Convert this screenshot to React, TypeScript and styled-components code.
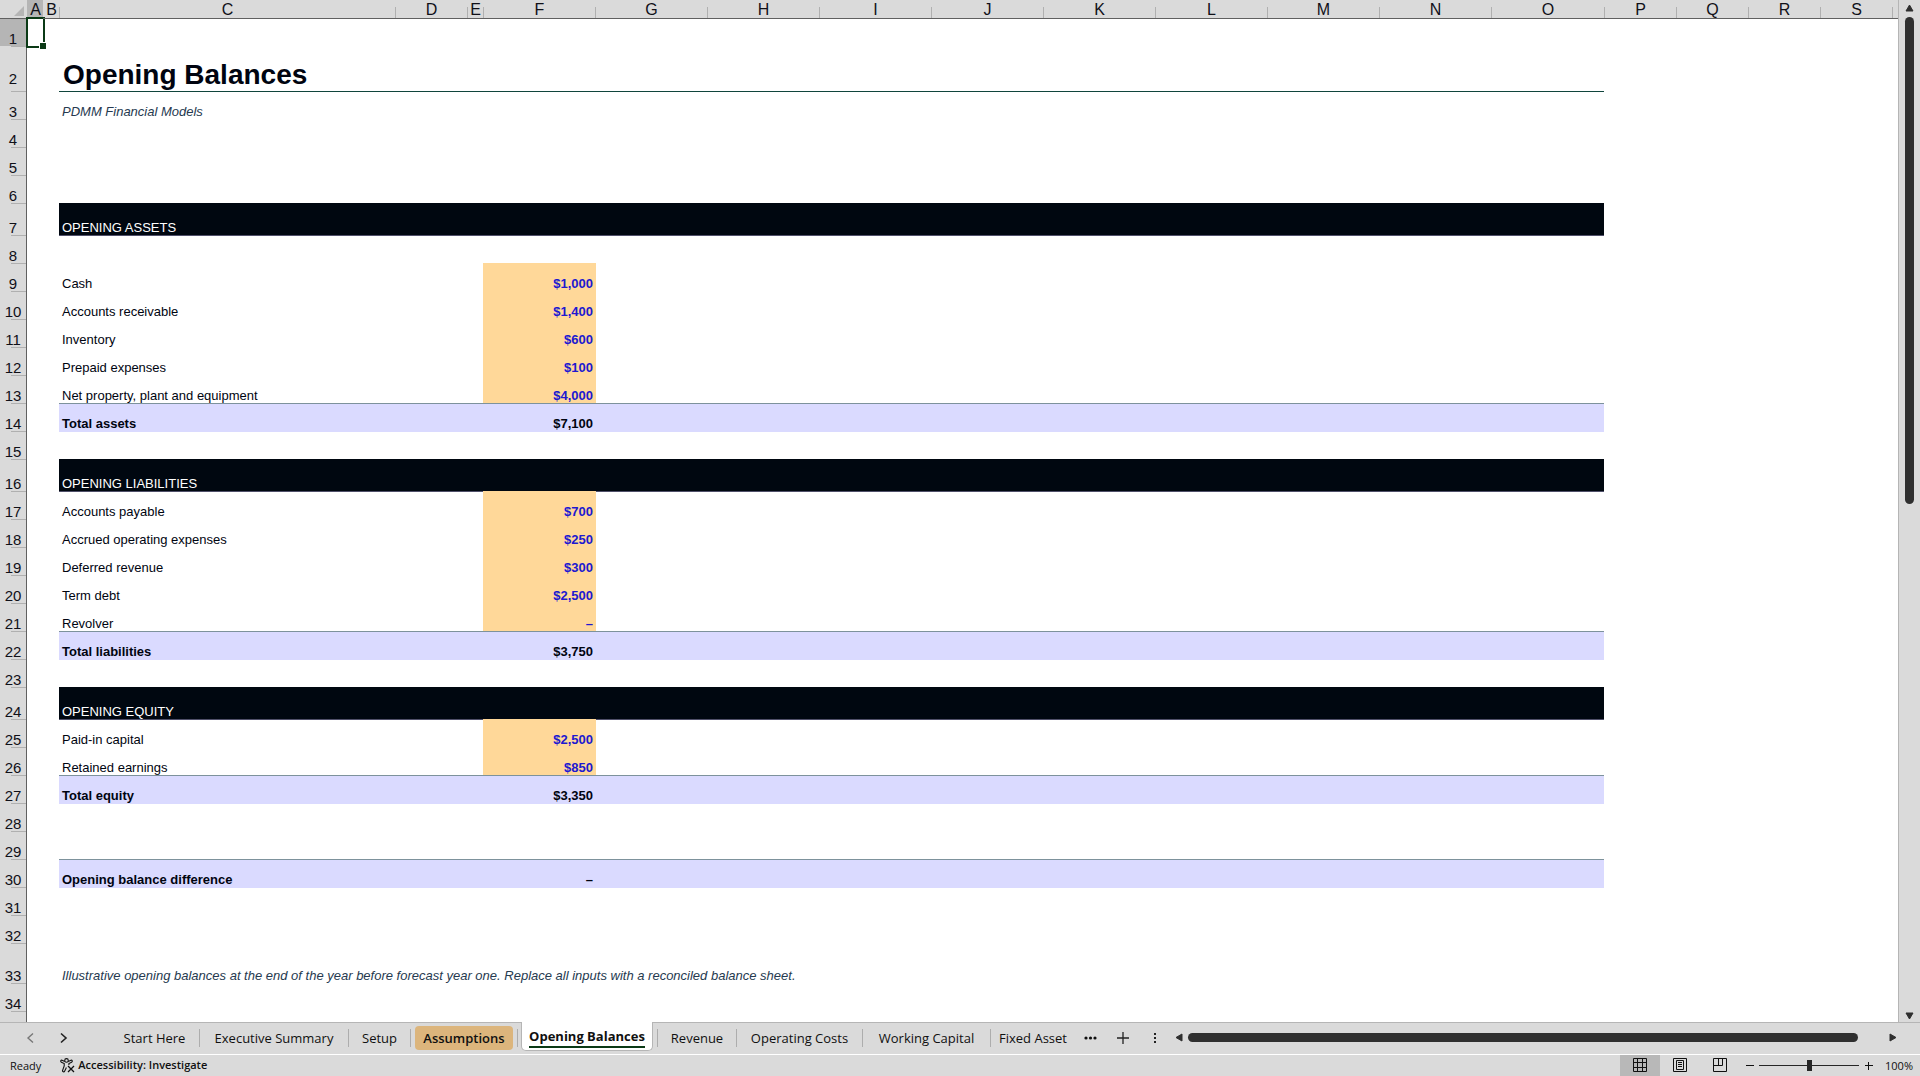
import React from "react";
import styled, { createGlobalStyle, css } from "styled-components";

const GlobalStyle = createGlobalStyle`
  * { box-sizing: border-box; }
  html, body, #root { height: 100%; }
  body { margin: 0; overflow: hidden; background: #dadada; }
  button { border: 0; padding: 0; background: none; font: inherit; color: inherit; cursor: default; }
`;

const sheetFont = `"Liberation Sans", Arial, sans-serif`;
const uiFont = `"Open Sans", "Noto Sans", sans-serif`;

const Window = styled.div`
  display: flex;
  flex-direction: column;
  height: 100vh;
  color: #101010;
  background: #dadada;
`;

const Workspace = styled.div`
  display: flex;
  flex: 1;
  min-height: 0;
`;

const Viewport = styled.main`
  flex: 1;
  min-width: 0;
  overflow: hidden;
  background: #fff;
  border-right: 1px solid #b5b5b5;
`;

const Grid = styled.table`
  width: 100%;
  table-layout: fixed;
  border-collapse: separate;
  border-spacing: 0;
  font: 13px/14px ${sheetFont};
  color: #000410;
`;

const Column = styled.col<{ $width?: number }>`
  ${(p) => p.$width && `width: ${p.$width}px;`}
`;

const ColumnHead = styled.th<{ $active?: boolean; $rule?: boolean }>`
  height: 18px;
  padding: 0 0 0 1px;
  overflow: hidden;
  vertical-align: bottom;
  text-align: center;
  font-size: 16px;
  line-height: 17px;
  font-weight: 400;
  color: #101018;
  background: ${(p) =>
    p.$rule
      ? "linear-gradient(#b0b0b0, #b0b0b0) left bottom / 1px 11px no-repeat #dadada"
      : p.$active
        ? "#b5b5b5"
        : "#dadada"};
`;

const Corner = styled.td`
  height: 18px;
  padding: 0 3px 2px 0;
  background: #dadada;
  vertical-align: bottom;
  text-align: right;
  line-height: 0;
`;

const Row = styled.tr<{ $height: number }>`
  height: ${(p) => p.$height}px;
`;

const RowHead = styled.th<{ $first?: boolean; $title?: boolean }>`
  padding: 0 0 ${(p) => (p.$title ? 5 : 0)}px 0;
  border-right: 1px solid #606060;
  ${(p) => p.$first && "border-top: 1px solid #606060;"}
  vertical-align: bottom;
  text-align: center;
  font-size: 15px;
  line-height: 15px;
  font-weight: 400;
  color: #101018;
  background: linear-gradient(#b0b0b0, #b0b0b0) right top / 15px 1px no-repeat
    ${(p) => (p.$first ? "#b5b5b5" : "#dadada")};
`;

type Tone = "plain" | "band" | "total" | "title" | "rule" | "top";

const tones = {
  plain: css``,
  top: css`
    border-top: 1px solid #606060;
  `,
  title: css`
    padding-left: 4px;
    font-size: 28px;
    line-height: 32px;
    font-weight: 700;
  `,
  rule: css`
    border-top: 1px solid #10453c;
  `,
  band: css`
    background: #000710;
    box-shadow: 0 1px 0 #50506a;
    color: #fff;
  `,
  total: css`
    background: #dadaff;
    box-shadow: 0 1px 0 #dadaff;
    border-top: 1px solid #7d929c;
    font-weight: 700;
  `,
};

const Cell = styled.td<{ $tone?: Tone; $note?: boolean }>`
  position: relative;
  padding: 0 2px 0 3px;
  vertical-align: bottom;
  white-space: nowrap;
  ${(p) => tones[p.$tone ?? "plain"]}
  ${(p) =>
    p.$note &&
    css`
      font-style: italic;
      color: #263a50;
    `}
`;

const Amount = styled(Cell)<{ $input?: boolean }>`
  text-align: right;
  font-weight: 700;
  ${(p) =>
    p.$input &&
    css`
      background: #ffd899;
      box-shadow: 1px 0 0 #ffd899;
      color: #2018d0;
    `}
`;

const Selection = styled.div`
  position: absolute;
  inset: -2px -2px -2px -1px;
  border: 2px solid #0b3a16;

  &::after {
    content: "";
    position: absolute;
    right: -3px;
    bottom: -3px;
    width: 6px;
    height: 6px;
    background: #0b3a16;
    border: solid #fff;
    border-width: 1px 0 0 1px;
  }
`;

const VerticalBar = styled.div`
  display: flex;
  flex-direction: column;
  align-items: center;
  width: 21px;
  padding: 4px 0 2px;
`;

const VerticalTrack = styled.div`
  flex: 1;
  width: 9px;
  margin: 5px 0;
`;

const VerticalThumb = styled.div`
  height: 49.2%;
  border-radius: 5px;
  background: #2f2f2f;
`;

const TabBar = styled.div`
  display: flex;
  align-items: stretch;
  height: 32px;
  border-top: 1px solid #b5b5b5;
  font: 13px/18px ${uiFont};
`;

const TabArrows = styled.div`
  display: flex;
  align-items: center;
  gap: 21px;
  width: 110px;
  padding: 0 0 1px 24px;
`;

const IconButton = styled.button`
  display: flex;
  align-items: center;
  justify-content: center;
`;

const TabList = styled.nav`
  display: flex;
  align-items: flex-start;
`;

const TabSlot = styled.div<{ $width: number; $rule?: boolean }>`
  display: flex;
  justify-content: center;
  width: ${(p) => p.$width}px;
  height: 18px;
  margin-top: 6px;
  border-right: 1px solid ${(p) => (p.$rule ? "#adadad" : "transparent")};
`;

const Tab = styled.button`
  white-space: nowrap;
`;

const TintedTab = styled.button`
  width: 98px;
  height: 24px;
  margin: 3px 0 0 4px;
  border-radius: 4px;
  background: #dcb57c;
  font-weight: 600;
`;

const ActiveTab = styled.button`
  width: 132px;
  height: 29px;
  margin: -1px 0 0 3px;
  padding: 2px 7px 0;
  border: 1px solid #b5b5b5;
  border-top: 0;
  border-radius: 0 0 5px 5px;
  background: #fff;
  font-weight: 700;
  white-space: nowrap;

  span {
    display: block;
    height: 21px;
    border-bottom: 2px solid #0b3a16;
  }
`;

const TabActions = styled.div`
  display: flex;
  align-items: center;
  gap: 20px;
  padding: 0 14px 1px 8px;
`;

const HorizontalBar = styled.div`
  display: flex;
  flex: 1;
  align-items: center;
  gap: 5px;
  padding: 0 23px 2px 0;
`;

const HorizontalTrack = styled.div`
  flex: 1;
  padding-right: 26px;
`;

const HorizontalThumb = styled.div`
  height: 9px;
  border-radius: 5px;
  background: #2f2f2f;
`;

const StatusBar = styled.footer`
  display: flex;
  align-items: center;
  justify-content: space-between;
  height: 22px;
  border-top: 1px solid #fff;
  font: 11px/16px ${uiFont};
`;

const StatusGroup = styled.div`
  display: flex;
  align-items: center;
  height: 100%;
`;

const Ready = styled.span`
  padding: 1px 19px 0 10px;
`;

const Accessibility = styled.button`
  display: flex;
  align-items: center;
  gap: 3px;
  padding-bottom: 1px;
  font-weight: 600;
`;

const ViewButton = styled.button<{ $active?: boolean }>`
  display: flex;
  align-items: center;
  justify-content: center;
  width: 40px;
  height: 21px;
  padding-bottom: 2px;
  background: ${(p) => (p.$active ? "#b8b8b8" : "none")};
`;

const ZoomButton = styled(IconButton)`
  width: 19px;
`;

const ZoomSlider = styled.input`
  appearance: none;
  width: 100px;
  height: 11px;
  margin: 0;
  background: linear-gradient(#262626, #262626) center / 100% 1px no-repeat;

  &::-webkit-slider-thumb {
    appearance: none;
    width: 5px;
    height: 11px;
    background: #262626;
  }
`;

const ZoomValue = styled.button`
  width: 42px;
  padding-right: 7px;
  text-align: right;
`;

const Triangle = ({ points, w, h }: { points: string; w: number; h: number }) => (
  <svg width={w} height={h} viewBox={`0 0 ${w} ${h}`} aria-hidden="true">
    <polygon points={points} fill="#2f2f2f" stroke="#2f2f2f" strokeLinejoin="round" />
  </svg>
);

const columns: [string, number][] = [
  ["A", 16], ["B", 16], ["C", 336], ["D", 72], ["E", 16], ["F", 112],
  ["G", 112], ["H", 112], ["I", 112], ["J", 112], ["K", 112], ["L", 112],
  ["M", 112], ["N", 112], ["O", 113], ["P", 72], ["Q", 72], ["R", 72], ["S", 72],
];

type SheetRow = {
  height?: number;
  label?: string;
  amount?: string;
  kind?: "input" | "total" | "band" | "title" | "subtitle" | "note";
};

const rows: SheetRow[] = [
  {},
  { height: 45, label: "Opening Balances", kind: "title" },
  { label: "PDMM Financial Models", kind: "subtitle" },
  {}, {}, {},
  { height: 32, label: "OPENING ASSETS", kind: "band" },
  {},
  { label: "Cash", amount: "$1,000", kind: "input" },
  { label: "Accounts receivable", amount: "$1,400", kind: "input" },
  { label: "Inventory", amount: "$600", kind: "input" },
  { label: "Prepaid expenses", amount: "$100", kind: "input" },
  { label: "Net property, plant and equipment", amount: "$4,000", kind: "input" },
  { label: "Total assets", amount: "$7,100", kind: "total" },
  {},
  { height: 32, label: "OPENING LIABILITIES", kind: "band" },
  { label: "Accounts payable", amount: "$700", kind: "input" },
  { label: "Accrued operating expenses", amount: "$250", kind: "input" },
  { label: "Deferred revenue", amount: "$300", kind: "input" },
  { label: "Term debt", amount: "$2,500", kind: "input" },
  { label: "Revolver", amount: "–", kind: "input" },
  { label: "Total liabilities", amount: "$3,750", kind: "total" },
  {},
  { height: 32, label: "OPENING EQUITY", kind: "band" },
  { label: "Paid-in capital", amount: "$2,500", kind: "input" },
  { label: "Retained earnings", amount: "$850", kind: "input" },
  { label: "Total equity", amount: "$3,350", kind: "total" },
  {}, {},
  { label: "Opening balance difference", amount: "–", kind: "total" },
  {}, {},
  {
    height: 40,
    label:
      "Illustrative opening balances at the end of the year before forecast year one. Replace all inputs with a reconciled balance sheet.",
    kind: "note",
  },
  {},
];

const toneOf = (kind: SheetRow["kind"]): Tone =>
  kind === "band" || kind === "total" || kind === "title" ? kind : kind === "subtitle" ? "rule" : "plain";

const SheetCells = ({ row }: { row: SheetRow }) => {
  const tone = toneOf(row.kind);
  if (!row.label) return <Cell colSpan={19} />;
  if (!row.amount)
    return (
      <>
        <Cell />
        <Cell colSpan={13} $tone={tone} $note={row.kind === "subtitle" || row.kind === "note"}>
          {row.label}
        </Cell>
        <Cell colSpan={5} />
      </>
    );
  return (
    <>
      <Cell />
      <Cell colSpan={3} $tone={tone}>{row.label}</Cell>
      <Amount $tone={tone} $input={row.kind === "input"}>{row.amount}</Amount>
      <Cell colSpan={9} $tone={tone} />
      <Cell colSpan={5} />
    </>
  );
};

const AccessibilityIcon = () => (
  <svg width="15" height="15" viewBox="0 0 15 15" fill="none" stroke="#101010" strokeWidth="1.1" aria-hidden="true">
    <circle cx="6.5" cy="2.4" r="1.8" />
    <path d="M4.8 3.4 2 2.2C.8 1.8.2 3.6 1.4 4.2L4.2 5.6V8L2.6 12.4c-.4 1.4 1.4 2 2 .8L6.4 9.4M8.2 3.4 11 2.2c1.2-.4 1.8 1.4.6 2L8.9 5.6V7" />
    <path d="m8 8 6 6M14 8l-6 6" strokeWidth="1.3" />
  </svg>
);

export default function App() {
  return (
    <Window>
      <GlobalStyle />
      <Workspace>
        <Viewport>
          <Grid>
            <colgroup>
              <Column $width={27} />
              {columns.map(([name, width]) => (
                <Column key={name} $width={width} />
              ))}
              <Column />
            </colgroup>
            <thead>
              <tr>
                <Corner>
                  <svg width="10" height="10" viewBox="0 0 10 10" aria-hidden="true">
                    <path d="M10 0v10H0z" fill="#b5b5b5" />
                  </svg>
                </Corner>
                {columns.map(([name], i) => (
                  <ColumnHead key={name} scope="col" $active={i === 0} $rule={i > 1}>
                    {name}
                  </ColumnHead>
                ))}
                <ColumnHead $rule />
              </tr>
            </thead>
            <tbody>
              {rows.map((row, i) => (
                <Row key={i} $height={row.height ?? 28}>
                  <RowHead scope="row" $first={i === 0} $title={row.kind === "title"}>
                    {i + 1}
                  </RowHead>
                  {i === 0 ? (
                    <>
                      <Cell $tone="top"><Selection /></Cell>
                      <Cell colSpan={19} $tone="top" />
                    </>
                  ) : (
                    <>
                      <Cell />
                      <SheetCells row={row} />
                    </>
                  )}
                </Row>
              ))}
              <Row $height={28}>
                <RowHead />
                <Cell colSpan={20} />
              </Row>
            </tbody>
          </Grid>
        </Viewport>
        <VerticalBar>
          <Triangle w={9} h={8} points="4.5,1 8,7 1,7" />
          <VerticalTrack><VerticalThumb /></VerticalTrack>
          <Triangle w={9} h={8} points="1,1 8,1 4.5,7" />
        </VerticalBar>
      </Workspace>

      <TabBar>
        <TabArrows>
          <IconButton aria-label="Previous sheets">
            <svg width="12" height="12" viewBox="0 0 12 12" fill="none" stroke="#777" strokeWidth="1.4"><path d="M9 1.5 4 6l5 4.5" /></svg>
          </IconButton>
          <IconButton aria-label="Next sheets">
            <svg width="12" height="12" viewBox="0 0 12 12" fill="none" stroke="#222" strokeWidth="1.6"><path d="m4 1.5 5 4.5-5 4.5" /></svg>
          </IconButton>
        </TabArrows>
        <TabList aria-label="Sheets">
          <TabSlot $width={90} $rule><Tab>Start Here</Tab></TabSlot>
          <TabSlot $width={149} $rule><Tab>Executive Summary</Tab></TabSlot>
          <TabSlot $width={62} $rule><Tab>Setup</Tab></TabSlot>
          <TintedTab>Assumptions</TintedTab>
          <TabSlot $width={5} $rule />
          <ActiveTab aria-current="page"><span>Opening Balances</span></ActiveTab>
          <TabSlot $width={5} $rule />
          <TabSlot $width={79} $rule><Tab>Revenue</Tab></TabSlot>
          <TabSlot $width={126} $rule><Tab>Operating Costs</Tab></TabSlot>
          <TabSlot $width={128} $rule><Tab>Working Capital</Tab></TabSlot>
          <TabSlot $width={85}><Tab>Fixed Asset</Tab></TabSlot>
        </TabList>
        <TabActions>
          <IconButton aria-label="More sheets">
            <svg width="13" height="4" viewBox="0 0 13 4" fill="#101010"><circle cx="2" cy="2" r="1.6" /><circle cx="6.5" cy="2" r="1.6" /><circle cx="11" cy="2" r="1.6" /></svg>
          </IconButton>
          <IconButton aria-label="New sheet">
            <svg width="12" height="12" viewBox="0 0 12 12" stroke="#222" strokeWidth="1.3"><path d="M6 0v12M0 6h12" /></svg>
          </IconButton>
          <IconButton aria-label="Resize tab bar">
            <svg width="12" height="12" viewBox="0 0 12 12" fill="#222"><path d="M5 1h2v2H5zM5 5h2v2H5zM5 9h2v2H5z" /></svg>
          </IconButton>
        </TabActions>
        <HorizontalBar>
          <Triangle w={8} h={9} points="7,1 7,8 1,4.5" />
          <HorizontalTrack><HorizontalThumb /></HorizontalTrack>
          <Triangle w={8} h={9} points="1,1 1,8 7,4.5" />
        </HorizontalBar>
      </TabBar>

      <StatusBar>
        <StatusGroup>
          <Ready>Ready</Ready>
          <Accessibility><AccessibilityIcon />Accessibility: Investigate</Accessibility>
        </StatusGroup>
        <StatusGroup>
          <ViewButton $active aria-label="Normal view">
            <svg width="14" height="14" viewBox="0 0 14 14" fill="none" stroke="#101010"><path d="M.5.5h13v13H.5zM.5 4.5h13M.5 9.5h13M4.5.5v13M9.5.5v13" /></svg>
          </ViewButton>
          <ViewButton aria-label="Page layout view">
            <svg width="14" height="14" viewBox="0 0 14 14" fill="none" stroke="#101010"><path d="M.5.5h13v13H.5zM3.5 2.5h7v9h-7zM5 4.5h4M5 6.5h4M5 8.5h4" /></svg>
          </ViewButton>
          <ViewButton aria-label="Page break preview">
            <svg width="14" height="14" viewBox="0 0 14 14" fill="none" stroke="#101010"><path d="M.5.5h13v13H.5zM.5 7.5h9V.5M5.5.5v7" /></svg>
          </ViewButton>
          <ZoomButton aria-label="Zoom out">
            <svg width="8" height="8" viewBox="0 0 8 8" stroke="#101010"><path d="M0 3.5h8" /></svg>
          </ZoomButton>
          <ZoomSlider type="range" min={0} max={100} defaultValue={50} aria-label="Zoom" />
          <ZoomButton aria-label="Zoom in">
            <svg width="8" height="8" viewBox="0 0 8 8" stroke="#101010"><path d="M0 3.5h8M3.5 0v8" /></svg>
          </ZoomButton>
          <ZoomValue>100%</ZoomValue>
        </StatusGroup>
      </StatusBar>
    </Window>
  );
}
